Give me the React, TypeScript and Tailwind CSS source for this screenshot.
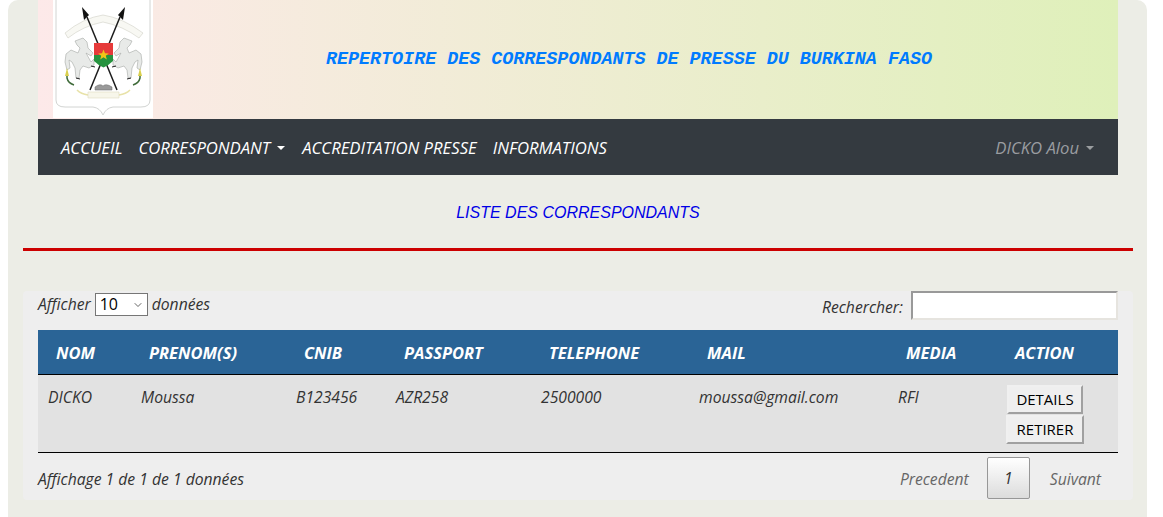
import React from 'react';
import { ChevronDown } from 'lucide-react';

const columns = [
  { label: 'NOM', width: 'w-[93px]' },
  { label: 'PRENOM(S)', width: 'w-[155px]' },
  { label: 'CNIB', width: 'w-[100px]' },
  { label: 'PASSPORT', width: 'w-[145px]' },
  { label: 'TELEPHONE', width: 'w-[158px]' },
  { label: 'MAIL', width: 'w-[199px]' },
  { label: 'MEDIA', width: 'w-[109px]' },
  { label: 'ACTION', width: 'w-[121px]' },
];

const row = ['DICKO', 'Moussa', 'B123456', 'AZR258', '2500000', 'moussa@gmail.com', 'RFI'];

const Caret = ({ className }: { className: string }) => (
  <span className={`ml-[7px] inline-block h-0 w-0 border-x-[4.5px] border-t-[4.5px] border-x-transparent ${className}`} />
);

const HALF = (
  <>
    {/* spear */}
    <path d="M34 17L64 90" stroke="#1c1c1c" strokeWidth="1.5" />
    <path d="M29 7L36 15L34 17L31 20Z" fill="#111111" />
    {/* horse */}
    <path
      d="M22 41L30 38L34 42L35 48L40 53L38 56L33 53L38 62L41 59L41 65L36 68L30 66L27 70L26 78L23 78L22 68L19 62L16 60L17 68L14 70L12 62L13 54L18 50L25 53L27 48L24 45Z"
      fill="#e8eae8"
      stroke="#a5a8a5"
      strokeWidth="0.6"
    />
    <path d="M23 78L27 79M38 66L42 67" stroke="#222222" strokeWidth="1" fill="none" />
    {/* plant */}
    <path d="M14 72V78Q15 83 21 85" fill="none" stroke="#3f6b3a" strokeWidth="1.5" />
    <path d="M14 68L12 76L16 76Z" fill="#d9cf4c" />
    <path d="M24 90Q28 94 35 95" fill="none" stroke="#e8e2a8" strokeWidth="1.5" />
  </>
);

const Emblem = () => (
  <svg viewBox="0 0 100 118" className="h-[118px] w-[100px]">
    <rect width="100" height="118" fill="#ffffff" />
    <path d="M3 0V100Q3 107 12 107H40Q47 108 50 115Q53 108 60 107H88Q97 107 97 100V0" fill="#ffffff" stroke="#d2d4d2" strokeWidth="1" />
    {/* top ribbon */}
    <path d="M12 33Q30 18 50 15Q70 18 90 33L86 38Q70 26 50 22Q30 26 15 38Z" fill="#f8f8f3" stroke="#d0d0c6" strokeWidth="0.6" />
    {HALF}
    <g transform="translate(101 0) scale(-1 1)">{HALF}</g>
    {/* shield */}
    <path d="M41 43H60V55H41Z" fill="#e63a3a" />
    <path d="M41 55H60V61Q56 65 50.5 67.5Q45 65 41 61Z" fill="#26933f" />
    <path d="M50.5 49.5L52 53.2L55.8 53.4L52.8 55.7L53.8 59.4L50.5 57.3L47.2 59.4L48.2 55.7L45.2 53.4L49 53.2Z" fill="#f2c418" />
    {/* book and bottom ribbon */}
    <path d="M42 87Q47 83 50 86Q53 83 59 87V90H42Z" fill="#9a9a9a" stroke="#666666" strokeWidth="0.5" />
    <path d="M35 92H66V98H35Z" fill="#f7f6ea" stroke="#dfdcc0" strokeWidth="0.6" />
  </svg>
);

const App: React.FC = () => {
  return (
    <div className="h-[517px] overflow-hidden bg-white font-['Open_Sans',sans-serif] text-[#212529]">
      <div className="ml-2 h-full w-[1139px] rounded-t-[10px] bg-[#ecede6] pl-[15px] pr-[14px]">
        <div className="px-[15px]">
          <header className="flex h-[119px] bg-gradient-to-r from-[#fde9e9] to-[#dff0ba]">
            <div className="ml-[15px]">
              <Emblem />
            </div>
            <h1 className="ml-[173px] mt-[47px] font-['Liberation_Mono',monospace] text-[18.36px] font-bold italic leading-[26px] text-[#007bff]">
              REPERTOIRE DES CORRESPONDANTS DE PRESSE DU BURKINA FASO
            </h1>
          </header>
          <nav className="flex h-[56px] items-center bg-[#343a40] pl-[23px] pr-[24px] pt-[2px] text-[16.7px] italic text-white">
            <span>ACCUEIL</span>
            <span className="ml-[16px] flex items-center">
              CORRESPONDANT
              <Caret className="border-t-white" />
            </span>
            <span className="ml-[17px]">ACCREDITATION PRESSE</span>
            <span className="ml-[16px]">INFORMATIONS</span>
            <span className="ml-auto flex items-center text-[#9a9da0]">
              DICKO Alou
              <Caret className="border-t-[#9a9da0]" />
            </span>
          </nav>
        </div>
        <h2 className="mt-[27px] text-center font-['Liberation_Sans',sans-serif] text-[16px] italic leading-[22px] text-[#0000e6]">
          LISTE DES CORRESPONDANTS
        </h2>
        <hr className="mt-[24px] border-0 border-t-[3px] border-[#cc0000]" />
        <section className="mt-[40px] h-[209px] rounded-[4px] bg-[#eeeeee] px-[15px]">
          <div className="flex h-[39px] items-start justify-between">
            <label className="mt-[1px] flex items-center text-[15.7px] italic text-[#333333]">
              <span className="pt-[1px]">Afficher</span>
              <span className="relative mx-[4px] flex h-[23px] w-[53px] items-center border border-[#767676] bg-white pl-[4px] text-[16px] not-italic text-black">
                10
                <ChevronDown className="absolute right-[3px] top-[5px] h-3 w-3 text-[#333333]" strokeWidth={1.5} />
              </span>
              <span className="pt-[1px]">données</span>
            </label>
            <label className="flex items-center text-[15.7px] italic text-[#333333]">
              <span className="pt-[4px]">Rechercher:</span>
              <span className="ml-[8px] block h-[29px] w-[207px] border-2 border-[#999999] border-r-[#e6e4df] border-b-[#e6e4df] bg-white" />
            </label>
          </div>
          <table className="w-[1080px] table-fixed border-collapse">
            <thead>
              <tr className="h-[44px] border-b border-black bg-[#2a6496] text-[16.5px] font-bold italic text-white">
                {columns.map((col) => (
                  <th key={col.label} className={`${col.width} pl-[18px] pt-[3px] text-left`}>
                    {col.label}
                  </th>
                ))}
              </tr>
            </thead>
            <tbody>
              <tr className="h-[78px] border-b border-black bg-[#e2e2e2] text-[15.7px] italic text-[#333333]">
                {row.map((cell) => (
                  <td key={cell} className="pl-[10px] pt-[11px] align-top leading-[22px]">
                    {cell}
                  </td>
                ))}
                <td className="pl-[10px] pt-[10px] align-top">
                  <button className="block h-[29px] w-[76px] border-2 border-[#f0f0f0] border-r-[#a0a0a0] border-b-[#a0a0a0] bg-[#efefef] text-center text-[15px] not-italic text-black">
                    DETAILS
                  </button>
                  <button className="-ml-px mt-px block h-[29px] w-[78px] border-2 border-[#f0f0f0] border-r-[#a0a0a0] border-b-[#a0a0a0] bg-[#efefef] text-center text-[15px] not-italic text-black">
                    RETIRER
                  </button>
                </td>
              </tr>
            </tbody>
          </table>
          <div className="flex items-start justify-between">
            <span className="mt-[15px] text-[15.7px] italic leading-[22px] text-[#333333]">
              Affichage 1 de 1 de 1 données
            </span>
            <div className="mr-[17px] mt-[4px] flex items-center text-[15.7px] italic text-[#666666]">
              <span className="pt-[5px]">Precedent</span>
              <span className="ml-[18px] mr-[20px] flex h-[42px] w-[43px] items-center justify-center rounded-[2px] border border-[#979797] bg-gradient-to-b from-white to-[#dcdcdc] pt-[2px] text-[#333333]">
                1
              </span>
              <span className="pt-[5px]">Suivant</span>
            </div>
          </div>
        </section>
      </div>
    </div>
  );
};

export default App;
